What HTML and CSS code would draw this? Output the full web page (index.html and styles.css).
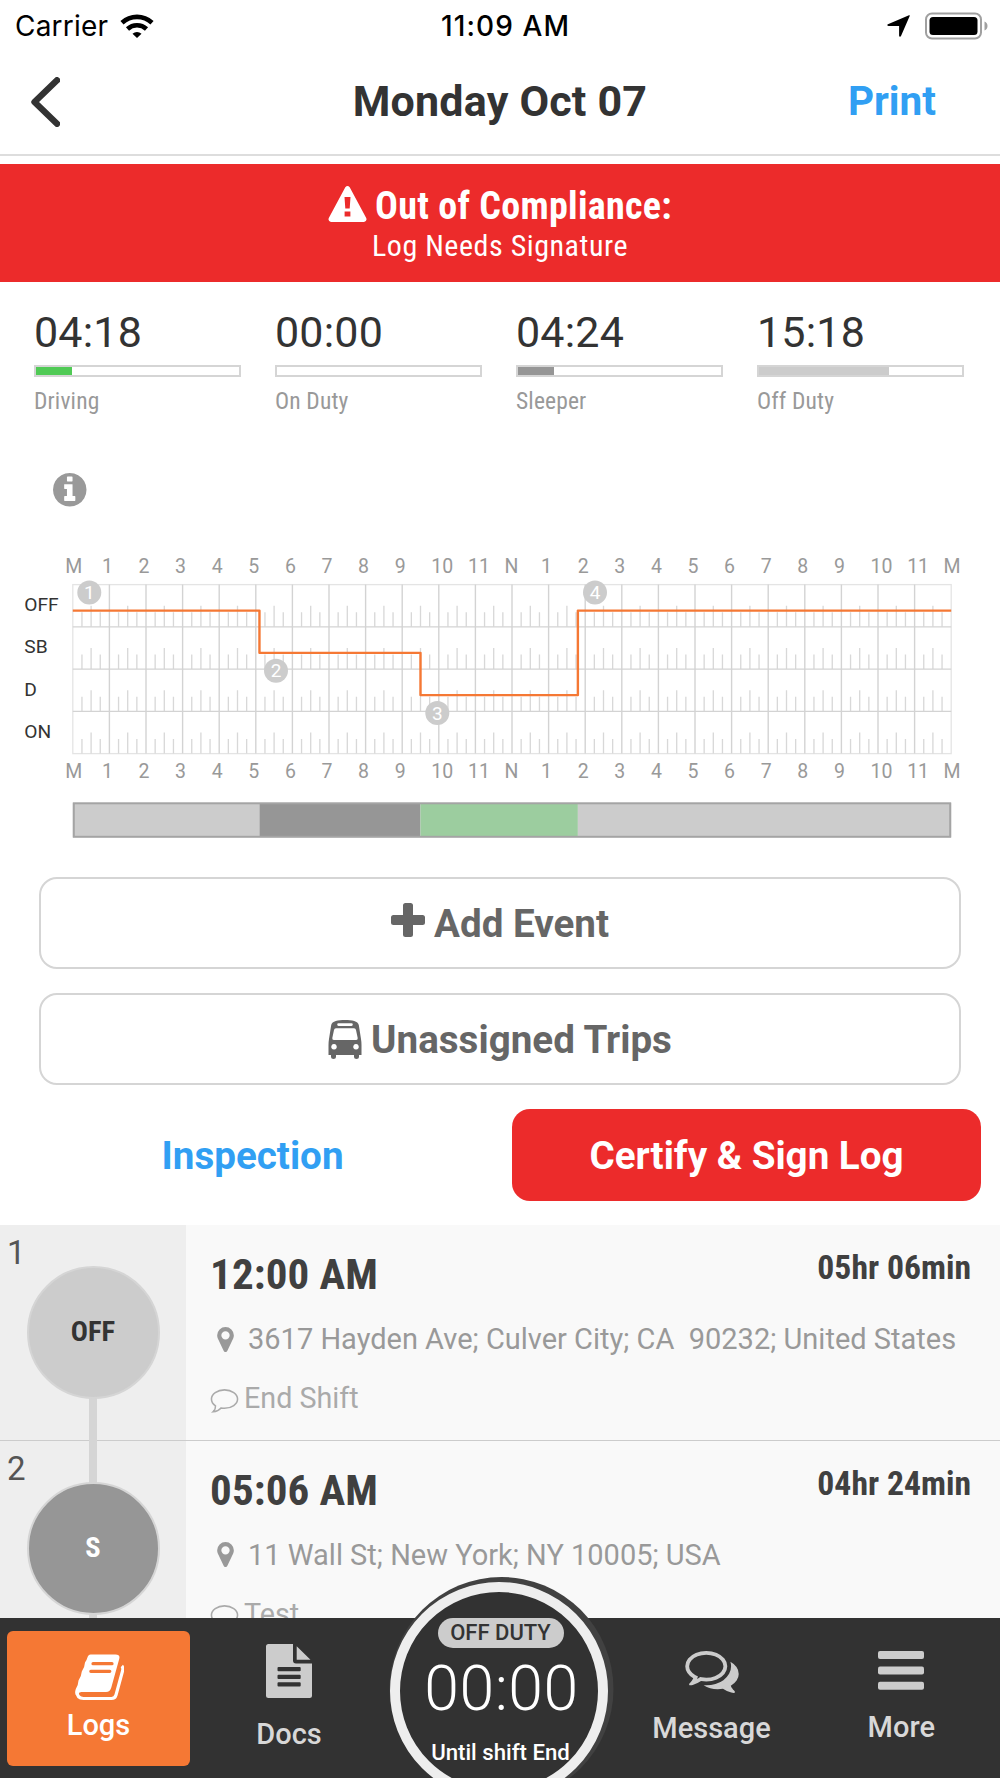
FILE: index.html
```html
<!DOCTYPE html>
<html lang="en">
<head>
    <meta charset="UTF-8">
    <meta name="viewport" content="width=device-width, initial-scale=1.0">
    <title>Driver Log</title>
    <link rel="stylesheet" href="styles.css">
</head>
<body>

<div class="status-bar">
    <div class="status-left">
        <span class="carrier">Carrier</span>
        <svg class="wifi" viewBox="0 0 34 24">
            <path d="M17 24l-4.500-4.300a7 7 0 0 1 9 0z"/>
            <path d="M7.500 15a14 14 0 0 1 19 0M2 8.800a22 22 0 0 1 30 0" fill="none" stroke="#000" stroke-width="4.600"/>
        </svg>
    </div>
    <span class="clock">11:09 AM</span>
    <div class="status-right">
        <svg class="location" viewBox="0 0 23 22"><path d="M22 .3c.6-.2.900.1.700.7L14 21c-.5 1-1.900.8-1.900-.3V11H1.500C0 11-.2 9.700.9 9.200z"/></svg>
        <svg class="battery" viewBox="0 0 63 28">
            <rect x="1" y="1.500" width="55" height="25" rx="6" fill="none" stroke="#a0a0a0" stroke-width="2"/>
            <rect x="4.500" y="5" width="48" height="18" rx="3.500"/>
            <path d="M59.500 9.500c4 1.500 4 7.500 0 9z" fill="#a0a0a0"/>
        </svg>
    </div>
</div>

<div class="nav">
    <a class="back" href="#"><svg viewBox="0 0 30 50"><path d="M27 3.300L4.500 25 27 46.700" fill="none" stroke="#333" stroke-width="6.400" stroke-linecap="round" stroke-linejoin="round"/></svg></a>
    <h1>Monday Oct 07</h1>
    <a class="print" href="#">Print</a>
</div>

<div class="banner">
    <div class="banner-title">
        <svg viewBox="0 0 39 36"><path fill-rule="evenodd" d="M17.300 1.300q2.200-2.500 4.400 0L38.200 32q1.200 3.400-2.200 4H3q-3.400-.6-2.200-4zM16.500 11l.8 11.500h4.400l.8-11.500zM16.600 25.500v5h5.800v-5z"/></svg>
        <span>Out of Compliance:</span>
    </div>
    <div class="banner-text">Log Needs Signature</div>
</div>

<div class="stats">
    <div class="stat">
        <div class="stat-time">04:18</div>
        <div class="meter"><div class="driving" style="width:17.5%"></div></div>
        <div class="stat-name">Driving</div>
    </div>
    <div class="stat">
        <div class="stat-time">00:00</div>
        <div class="meter"></div>
        <div class="stat-name">On Duty</div>
    </div>
    <div class="stat">
        <div class="stat-time">04:24</div>
        <div class="meter"><div class="sleeper" style="width:17.5%"></div></div>
        <div class="stat-name">Sleeper</div>
    </div>
    <div class="stat">
        <div class="stat-time">15:18</div>
        <div class="meter"><div class="off" style="width:64%"></div></div>
        <div class="stat-name">Off Duty</div>
    </div>
</div>

<div class="info">
    <svg viewBox="128 128 1536 1536"><path d="M1152 1376v-160q0-14-9-23t-23-9h-96v-512q0-14-9-23t-23-9h-320q-14 0-23 9t-9 23v160q0 14 9 23t23 9h96v320h-96q-14 0-23 9t-9 23v160q0 14 9 23t23 9h448q14 0 23-9t9-23zm-128-896v-160q0-14-9-23t-23-9h-192q-14 0-23 9t-9 23v160q0 14 9 23t23 9h192q14 0 23-9t9-23zm640 416q0 209-103 385.500t-279.500 279.500-385.500 103-385.500-103-279.500-279.500-103-385.500 103-385.500 279.500-279.500 385.500-103 385.500 103 279.500 279.500 103 385.500z"/></svg>
</div>

<svg id="chart" class="chart" viewBox="0 0 1000 337"></svg>

<div class="actions">
    <button class="btn">
        <svg class="plus" viewBox="0 0 34 34"><path d="M14.500 0h5q2.500 0 2.500 2.500V12h9.500q2.500 0 2.500 2.500v5q0 2.500-2.500 2.500H22v9.500q0 2.500-2.500 2.500h-5q-2.500 0-2.500-2.500V22H2.500Q0 22 0 19.500v-5Q0 12 2.500 12H12V2.500Q12 0 14.500 0z"/></svg>
        <span>Add Event</span>
    </button>
    <button class="btn">
        <svg class="bus" viewBox="0 0 34 39"><path fill-rule="evenodd" d="M17 0C24 0 30 1.200 30.800 5L33 19q.5 3 .5 6v10H31v2q0 2-2.500 2T26 37v-2H8v2q0 2-2.500 2T3 37v-2H.5V25q0-3 .5-6L3.200 5C4 1.200 10 0 17 0zM10.500 3.300q-1.300 0-1.300 1.300t1.300 1.300h13q1.300 0 1.300-1.300t-1.300-1.300zM8 8.300q-1.700 0-2 1.700L4.300 18q-.3 2 1.500 2h22.400q1.800 0 1.500-2L28 10q-.3-1.700-2-1.700zM6 24a2.800 2.800 0 1 0 .01 0zM28 24a2.800 2.800 0 1 0 .01 0z"/></svg>
        <span>Unassigned Trips</span>
    </button>
    <div class="actions-row">
        <a class="inspection" href="#">Inspection</a>
        <button class="certify">Certify &amp; Sign Log</button>
    </div>
</div>

<div class="log-list">
    <div class="log">
        <div class="log-side">
            <span class="log-number">1</span>
            <span class="log-status">OFF</span>
        </div>
        <div class="log-body">
            <div class="log-head"><span class="log-time">12:00 AM</span><span class="log-length">05hr 06min</span></div>
            <div class="log-place">
                <svg viewBox="384 128 1024 1536"><path d="M1152 640q0-106-75-181t-181-75-181 75-75 181 75 181 181 75 181-75 75-181zm256 0q0 109-33 179l-364 774q-16 33-47.500 52t-67.500 19-67.500-19-46.500-52l-365-774q-33-70-33-179 0-212 150-362t362-150 362 150 150 362z"/></svg>
                <span>3617 Hayden Ave; Culver City; CA&nbsp; 90232; United States</span>
            </div>
            <div class="log-note">
                <svg viewBox="0 0 30 26"><path d="M15 1.500c7.500 0 13.500 4.200 13.500 9.500S22.500 20.500 15 20.500q-1.800 0-3.500-.3-3 3.500-8.300 4 2.800-2.700 2.500-6.200Q1.500 15.400 1.500 11C1.500 5.700 7.500 1.500 15 1.500z"/></svg>
                <span>End Shift</span>
            </div>
        </div>
    </div>
    <div class="log">
        <div class="log-side">
            <span class="log-number">2</span>
            <span class="log-status sleeping">S</span>
        </div>
        <div class="log-body">
            <div class="log-head"><span class="log-time">05:06 AM</span><span class="log-length">04hr 24min</span></div>
            <div class="log-place">
                <svg viewBox="384 128 1024 1536"><path d="M1152 640q0-106-75-181t-181-75-181 75-75 181 75 181 181 75 181-75 75-181zm256 0q0 109-33 179l-364 774q-16 33-47.500 52t-67.500 19-67.500-19-46.500-52l-365-774q-33-70-33-179 0-212 150-362t362-150 362 150 150 362z"/></svg>
                <span>11 Wall St; New York; NY 10005; USA</span>
            </div>
            <div class="log-note">
                <svg viewBox="0 0 30 26"><path d="M15 1.500c7.500 0 13.500 4.200 13.500 9.500S22.500 20.500 15 20.500q-1.800 0-3.500-.3-3 3.500-8.300 4 2.800-2.700 2.500-6.200Q1.500 15.400 1.500 11C1.500 5.700 7.500 1.500 15 1.500z"/></svg>
                <span>Test</span>
            </div>
        </div>
    </div>
</div>

<div class="tabs">
    <a class="tab logs" href="#">
        <svg viewBox="0 0 49 47">
            <path d="M15.500.5H40.500q5 0 3.700 4.500L36.300 33.500Q35 38 31 38H6.500Q3 38 4 41H.8Q-.3 38 .8 35 3.300 31 3.500 26.500 6.500 22 6.800 17.500 9.800 13 10 8.500 12 5.500 12.800 2.500 13.700.5 15.500.5z"/>
            <path d="M2 37.500Q2 44.500 8.500 44.500H36.500Q40 44.500 41 41L47.700 16.500Q48.300 13.500 46.800 12" fill="none" stroke="#fff" stroke-width="3.200"/>
            <path d="M18 9.700H37M15.800 17.300H34.800" stroke="#f57834" stroke-width="3.200" stroke-linecap="round"/>
        </svg>
        <span>Logs</span>
    </a>
    <a class="tab docs" href="#">
        <svg viewBox="0 0 46 54"><path fill-rule="evenodd" d="M2.500 0H27v16.500q0 3 3 3h16v32q0 2.500-2.500 2.500h-41Q0 54 0 51.500v-49Q0 0 2.500 0zM12.500 23q-1 0-1 1v2.300q0 1 1 1h21.200q1 0 1-1V24q0-1-1-1zM12.500 30.700q-1 0-1 1V34q0 1 1 1h21.200q1 0 1-1v-2.300q0-1-1-1zM12.500 38.300q-1 0-1 1v2.300q0 1 1 1h21.200q1 0 1-1v-2.300q0-1-1-1zM30.700 2.200L44.500 15.700H30.700z"/></svg>
        <span>Docs</span>
    </a>
    <div class="timer">
        <span class="timer-status">OFF DUTY</span>
        <span class="timer-time">00:00</span>
        <span class="timer-label">Until shift End</span>
    </div>
    <a class="tab message" href="#">
        <svg viewBox="0 256 1792 1408"><path d="M704 384q-153 0-286 52t-211.500 141-78.500 191q0 82 53 158t149 132l97 56-35 84q34-20 62-39l44-31 53 10q78 14 153 14 153 0 286-52t211.500-141 78.500-191-78.500-191-211.500-141-286-52zm0-128q191 0 353.500 68.500t256.500 186.500 94 257-94 257-256.500 186.500-353.500 68.500q-86 0-176-16-124 88-278 128-36 9-86 16h-3q-11 0-20.500-8t-11.500-21q-1-3-1-6.500t.5-6.500 2-6l2.500-5 3.500-5.500 4-5 4.500-5 4-4.500q5-6 23-25t26-29.500 22.500-29 25-38.500 20.500-44q-124-72-195-177t-71-224q0-139 94-257t256.500-186.500 353.500-68.500zm822 1169q10 24 20.500 44t25 38.500 22.500 29 26 29.500 23 25q1 1 4 4.500t4.500 5 4 5 3.500 5.500l2.500 5 2 6 .5 6.500-1 6.500q-3 14-13 22t-22 7q-50-7-86-16-154-40-278-128-90 16-176 16-271 0-472-132 58 4 88 4 161 0 309-45t264-129q125-92 192-212t67-254q0-77-23-152 129 71 204 178t75 230q0 120-71 224.500t-195 176.500z"/></svg>
        <span>Message</span>
    </a>
    <a class="tab more" href="#">
        <svg viewBox="0 0 46 39"><rect width="46" height="8" rx="2"/><rect y="15.500" width="46" height="8" rx="2"/><rect y="30.800" width="46" height="8" rx="2"/></svg>
        <span>More</span>
    </a>
</div>

<script>
    const chart = document.getElementById('chart');
    const left = 72.8, top_ = 44.6, hour = 36.6, row = 42.25;
    const width = hour * 24;

    // start and end in hours, row 0 = OFF, 1 = SB, 2 = D, 3 = ON
    const events = [
        { start: 0, end: 5.1, row: 0, color: "#ccc", markX: 89.3, markY: 52.5 },
        { start: 5.1, end: 9.5, row: 1, color: "#969696", markX: 276, markY: 130.7 },
        { start: 9.5, end: 13.8, row: 2, color: "#9ccd9f", markX: 437.3, markY: 173 },
        { start: 13.8, end: 24, row: 0, color: "#ccc", markX: 595, markY: 52.5 },
    ];

    function draw(tag, attrs, text) {
        const el = document.createElementNS('http://www.w3.org/2000/svg', tag);
        for (const key in attrs) el.setAttribute(key, attrs[key]);
        if (text) el.textContent = text;
        chart.appendChild(el);
    }

    let ticks = '';
    let lines = '';
    for (let q = 1; q < 96; q++) {
        const x = left + q * hour / 4;
        if (q % 4 === 0) {
            lines += `M${x} ${top_}V${top_ + row * 4}`;
            continue;
        }
        for (let r = 1; r <= 4; r++) {
            ticks += `M${x} ${top_ + row * r}v${q % 2 ? -14.5 : -21}`;
        }
    }
    for (let r = 1; r < 4; r++) {
        lines += `M${left} ${top_ + row * r}h${width}`;
    }
    draw('rect', { x: left, y: top_, width: width, height: row * 4, class: 'frame' });
    draw('path', { d: ticks, class: 'ticks' });
    draw('path', { d: lines, class: 'lines' });

    for (let h = 0; h <= 24; h++) {
        let label = String(h % 12), shift = -2;
        if (h % 24 === 0) { label = 'M'; shift = 0.9; }
        else if (h === 12) { label = 'N'; shift = -0.5; }
        else if (label.length > 1) shift = 3.5;
        const x = left + h * hour + shift;
        draw('text', { x: x, y: 32.7, class: 'hour' }, label);
        draw('text', { x: x, y: 238, class: 'hour' }, label);
    }

    ['OFF', 'SB', 'D', 'ON'].forEach((name, i) => {
        draw('text', { x: 24.3, y: 71 + row * i, class: 'row-name' }, name);
    });

    let path = '';
    events.forEach((e, i) => {
        const y = 70.6 + row * e.row;
        path += `${i ? 'L' : 'M'}${left + e.start * hour} ${y}H${left + e.end * hour}`;
        draw('rect', { x: left + e.start * hour, y: 263, width: (e.end - e.start) * hour, height: 34, fill: e.color });
    });
    draw('rect', { x: left + 1, y: 263.3, width: width - 2, height: 33.5, class: 'bar' });
    draw('path', { d: path, class: 'duty' });

    events.forEach((e, i) => {
        draw('circle', { cx: e.markX, cy: e.markY, r: 12, fill: '#ccc' });
        draw('text', { x: e.markX, y: e.markY + 6.7, class: 'mark' }, String(i + 1));
    });
</script>

</body>
</html>
```
FILE: styles.css
```css
* {
    box-sizing: border-box;
}
body {
    font-family: Roboto, "Liberation Sans", sans-serif;
    margin: 0;
    display: flex;
    flex-direction: column;
    height: 1778px;
    overflow: hidden;
    background-color: #fff;
    color: #333;
}
a {
    text-decoration: none;
}
svg {
    display: block;
    flex-shrink: 0;
}
h1 {
    margin: 0;
}
button {
    font-family: inherit;
    padding: 0;
    background: none;
    border: none;
}
.status-bar,
.nav {
    display: grid;
    grid-template-columns: 1fr auto 1fr;
    align-items: center;
    flex-shrink: 0;
}
.status-bar {
    height: 51px;
    padding: 0 12px 0 15px;
    font-family: Inter, "Liberation Sans", sans-serif;
    font-size: 28px;
    line-height: 34px;
    color: #000;
}
.status-left,
.status-right {
    display: flex;
    align-items: center;
}
.status-right {
    justify-content: flex-end;
    gap: 15px;
}
.clock {
    margin-left: 8px;
    font-weight: 500;
    letter-spacing: 1.1px;
}
.carrier {
    letter-spacing: 0.2px;
}
.wifi {
    width: 34px;
    height: 24px;
    margin-left: 12px;
}
.location {
    width: 23px;
    height: 22px;
}
.battery {
    width: 63px;
    height: 28px;
}
.nav {
    height: 105px;
    padding: 0 64px 3px;
    border-bottom: 2px solid #ddd;
}
.back {
    margin: 2px 0 0 -34px;
}
.back svg {
    width: 30px;
    height: 50px;
}
.nav h1 {
    font-size: 43px;
    line-height: 50px;
    font-weight: 700;
    letter-spacing: 0.2px;
}
.print {
    justify-self: end;
    font-size: 40.5px;
    font-weight: 700;
    color: #319ff3;
}
.banner {
    flex-shrink: 0;
    height: 118px;
    margin-top: 8px;
    padding-top: 20px;
    background-color: #ec2b2b;
    color: #fff;
    text-align: center;
    font-family: "Roboto Condensed", Roboto, sans-serif;
    font-stretch: 75%;
}
.banner-title {
    display: flex;
    justify-content: center;
    gap: 8px;
    font-size: 38px;
    line-height: 44px;
    font-weight: 700;
    letter-spacing: 0.3px;
}
.banner-title svg {
    width: 39px;
    height: 36px;
    margin-top: 2px;
    fill: #fff;
}
.banner-text {
    font-size: 30px;
    line-height: 36px;
    letter-spacing: 0.55px;
}
.stats {
    display: grid;
    grid-template-columns: repeat(4, 207px);
    gap: 34px;
    flex-shrink: 0;
    height: 134px;
    padding: 25px 34px 0;
}
.stat-time {
    font-size: 43px;
    line-height: 50px;
    letter-spacing: 0.2px;
}
.meter {
    height: 12px;
    margin: 8px 0 9px;
    border: 2px solid #d5d5d5;
}
.meter div {
    height: 8px;
}
.driving {
    background-color: #50ca55;
}
.sleeper {
    background-color: #969696;
}
.off {
    background-color: #ccc;
}
.stat-name {
    font-family: "Roboto Condensed", Roboto, sans-serif;
    font-stretch: 75%;
    font-size: 23.5px;
    line-height: 30px;
    letter-spacing: 0.15px;
    color: #999;
}
.info {
    flex-shrink: 0;
    height: 124px;
    padding: 57px 0 0 53px;
}
.info svg {
    width: 33.500px;
    height: 33.500px;
    fill: #999;
}
.chart {
    width: 1000px;
    height: 337px;
}
.chart .frame {
    fill: none;
    stroke: #e4e4e4;
    stroke-width: 1.3px;
}
.chart .ticks {
    stroke: #d8d8d8;
    stroke-width: 1.3px;
}
.chart .lines {
    fill: none;
    stroke: #d3d3d3;
    stroke-width: 1.4px;
}
.chart .hour {
    font-size: 19.5px;
    fill: #999;
    text-anchor: middle;
}
.chart .row-name {
    font-size: 19.2px;
    fill: #333;
}
.chart .bar {
    fill: none;
    stroke: #a4a4a4;
    stroke-width: 2px;
}
.chart .duty {
    fill: none;
    stroke: #f57834;
    stroke-width: 2.4px;
    stroke-linejoin: round;
}
.chart .mark {
    font-size: 19px;
    fill: #fff;
    text-anchor: middle;
}
.actions {
    display: flex;
    flex-direction: column;
    gap: 24px;
    flex-shrink: 0;
    padding: 0 39px 24px;
}
.btn {
    display: flex;
    justify-content: center;
    align-items: center;
    gap: 9px;
    height: 92px;
    border: 2px solid #d5d5d5;
    border-radius: 18px;
    color: #666;
    font-size: 38.6px;
    font-weight: 700;
}
.btn svg {
    fill: #666;
}
.plus {
    width: 34px;
    height: 34px;
    margin-bottom: 7px;
}
.bus {
    width: 34px;
    height: 39px;
}
.actions-row {
    display: grid;
    grid-template-columns: 1fr 469px;
    margin: 0 -20px 0 -46px;
    align-items: center;
}
.inspection {
    text-align: center;
    font-size: 38.6px;
    font-weight: 700;
    color: #319ff3;
}
.certify {
    height: 92px;
    border-radius: 18px;
    background-color: #ec2b2b;
    color: #fff;
    font-size: 38.6px;
    font-weight: 700;
}
.log-list {
    flex: 1;
    min-height: 0;
    overflow: hidden;
}
.log {
    display: flex;
    height: 215.7px;
    border-bottom: 1px solid #ccc;
    background-color: #f9f9f9;
}
.log-side {
    position: relative;
    width: 186px;
    background-color: #eee;
}
/* line that joins the status circles */
.log-side::before {
    content: "";
    position: absolute;
    left: 89px;
    top: 0;
    width: 8px;
    height: 100%;
    background-color: #d5d5d5;
}
.log:first-child .log-side::before {
    top: 107px;
    height: 109px;
}
.log-number {
    position: absolute;
    left: 7px;
    top: 8px;
    font-size: 33px;
    line-height: 40px;
    color: #555;
}
.log-status {
    position: relative;
    display: flex;
    justify-content: center;
    align-items: center;
    width: 133px;
    height: 133px;
    margin: 41px 0 0 26.5px;
    padding-bottom: 2px;
    border: 2px solid #d5d5d5;
    border-radius: 50%;
    background-color: #ccc;
    font-family: "Roboto Condensed", Roboto, sans-serif;
    font-stretch: 75%;
    font-size: 28.5px;
    font-weight: 700;
}
.log-status.sleeping {
    background-color: #969696;
    color: #fff;
}
.log-body {
    flex: 1;
    padding: 24px 29px 0 24px;
}
.log-head {
    display: flex;
    justify-content: space-between;
    font-family: "Roboto Condensed", Roboto, sans-serif;
    font-stretch: 75%;
    font-weight: 700;
    color: #404040;
}
.log-time {
    font-size: 43px;
    line-height: 50px;
    letter-spacing: 0.15px;
}
.log-length {
    font-size: 33.7px;
    line-height: 38px;
}
.log-place,
.log-note {
    display: flex;
    align-items: center;
    font-size: 29px;
    line-height: 36px;
    white-space: nowrap;
}
.log-place {
    margin-top: 22px;
    padding-left: 7px;
    gap: 14px;
    color: #999;
}
.log-place svg {
    width: 17px;
    height: 25px;
    fill: #999;
}
.log-note {
    margin-top: 23px;
    gap: 5px;
    font-size: 28.7px;
    color: #aaa;
}
.log-note svg {
    width: 29px;
    height: 26px;
    margin-top: 6px;
    fill: none;
    stroke: #aaa;
    stroke-width: 1.6px;
}
.tabs {
    position: relative;
    display: flex;
    flex-shrink: 0;
    height: 160px;
    background-color: #323232;
}
.tab {
    display: flex;
    flex-direction: column;
    align-items: center;
    font-size: 29px;
    line-height: 36px;
    font-weight: 500;
    color: #d8d8d8;
}
.tab svg {
    fill: #ccc;
}
.tab.logs {
    width: 183px;
    height: 135px;
    margin: 12.500px 0 0 7px;
    padding-top: 23.500px;
    border-radius: 6px;
    background-color: #f57834;
    color: #fff;
}
.logs svg {
    width: 49px;
    height: 47px;
    margin-bottom: 6px;
    margin-left: 2px;
    fill: #fff;
}
.docs {
    width: 198px;
    padding-top: 26px;
}
.docs svg {
    width: 46px;
    height: 54px;
    margin-bottom: 18px;
}
.message {
    width: 200px;
    margin-left: 223.5px;
    padding-top: 33px;
}
.message svg {
    width: 54px;
    height: 42px;
    margin-bottom: 17px;
}
.more {
    flex: 1;
    padding-top: 33px;
    padding-right: 9px;
}
.more svg {
    width: 46px;
    height: 39px;
    margin-bottom: 19px;
}
/* round shift timer, hangs over the list */
.timer {
    position: absolute;
    left: 389.5px;
    top: -36px;
    width: 218px;
    height: 218px;
    display: flex;
    flex-direction: column;
    align-items: center;
    padding-top: 26px;
    border: 10px solid #eee;
    border-radius: 50%;
    background-color: #323232;
    box-shadow: 2.500px -2px 0 3px #414141;
    color: #fff;
}
.timer-status {
    width: 126px;
    height: 30px;
    margin-left: 4px;
    border-radius: 15px;
    background-color: #ccc;
    color: #333;
    text-align: center;
    font-size: 22px;
    line-height: 29px;
    font-weight: 500;
}
.timer-time {
    margin: 4px 0 0 6px;
    font-size: 62.5px;
    line-height: 74px;
    letter-spacing: 0.5px;
    font-weight: 300;
}
.timer-label {
    margin-top: 12px;
    margin-left: 4px;
    font-size: 22.2px;
    line-height: 28px;
    font-weight: 500;
    white-space: nowrap;
}
```
